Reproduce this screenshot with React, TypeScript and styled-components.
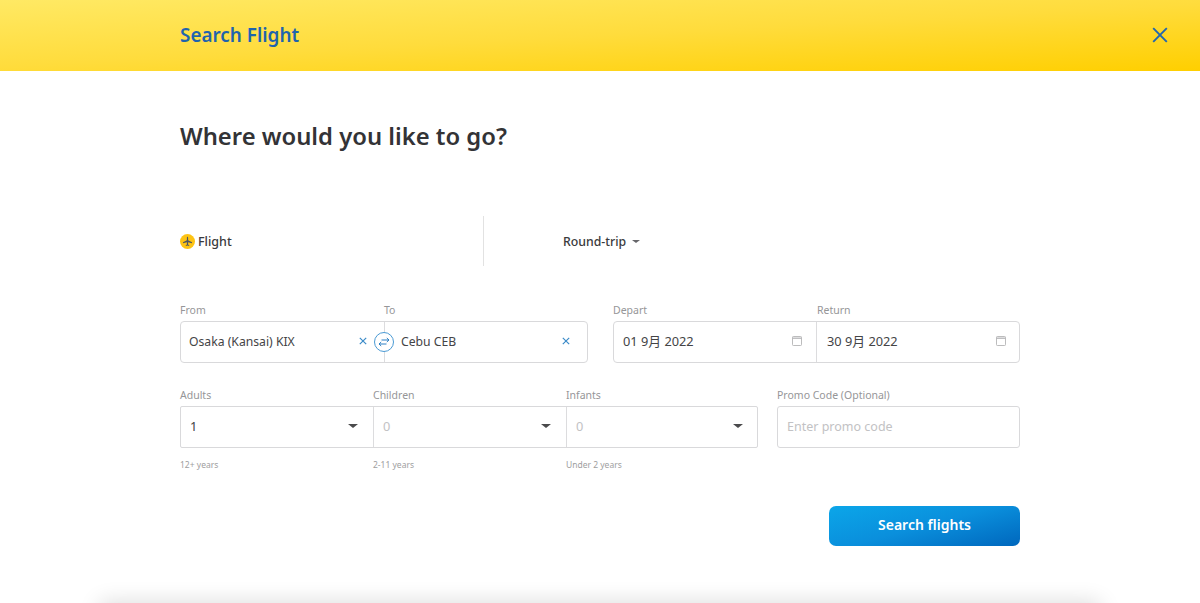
import styled, { createGlobalStyle } from "styled-components";

const GlobalStyle = createGlobalStyle`
  html, body {
    margin: 0;
    padding: 0;
    background: #fff;
  }
  * {
    box-sizing: border-box;
  }
`;

const bodyFont = `"Noto Sans", "Noto Sans CJK JP", sans-serif`;
const titleFont = `"Noto Sans", "Lato", sans-serif`;

const Page = styled.div`
  width: 1200px;
  height: 603px;
  overflow: hidden;
  background: #fff;
  font-family: ${bodyFont};
  color: #3a3a3c;
`;

const Header = styled.header`
  height: 71px;
  padding: 0 32px 2px 180px;
  display: flex;
  align-items: center;
  justify-content: space-between;
  background: linear-gradient(177deg, #ffe964 0%, #ffdc3c 50%, #ffcf00 100%);
`;

const HeaderTitle = styled.div`
  font-family: ${titleFont};
  font-size: 18.9px;
  font-weight: 600;
  color: #1f64ad;
`;

const CloseButton = styled.button`
  width: 16px;
  height: 16px;
  padding: 0;
  border: 0;
  background: none;
  display: block;
  color: #2266ae;
`;

const Content = styled.main`
  width: 840px;
  margin: 0 auto 0 180px;
`;

const Heading = styled.h1`
  margin: 47px 0 0;
  height: 36px;
  font-family: ${titleFont};
  font-size: 23.8px;
  line-height: 36px;
  font-weight: 600;
  color: #333336;
`;

const TripBar = styled.div`
  margin-top: 62px;
  height: 50px;
  display: flex;
  align-items: center;
`;

const TripType = styled.div`
  width: 304px;
  height: 100%;
  display: flex;
  align-items: center;
  gap: 3px;
  border-right: 1.5px solid #e2e2e2;
  font-size: 12.5px;
  font-weight: 500;
`;

const FlightBadge = styled.span`
  width: 15px;
  height: 15px;
  border-radius: 50%;
  background: #fdc314;
  display: flex;
  align-items: center;
  justify-content: center;
`;

const TripMode = styled.div`
  margin-left: 79px;
  display: flex;
  align-items: center;
  gap: 6px;
  font-size: 12.3px;
  font-weight: 500;
`;

const Caret = styled.span<{ $size: number; $color: string }>`
  width: 0;
  height: 0;
  border-left: ${(props) => props.$size}px solid transparent;
  border-right: ${(props) => props.$size}px solid transparent;
  border-top: ${(props) => props.$size - 1}px solid ${(props) => props.$color};
`;

const RouteRow = styled.div`
  margin-top: 37px;
  display: grid;
  grid-template-columns: 408px 407px;
  column-gap: 25px;
`;

const FieldGroup = styled.div`
  display: flex;
  flex-direction: column;
`;

const Labels = styled.div<{ $columns: string }>`
  display: grid;
  grid-template-columns: ${(props) => props.$columns};
  height: 14px;
  margin-bottom: 4px;
`;

const Label = styled.span`
  font-size: 10.5px;
  line-height: 14px;
  color: #969698;
`;

const Box = styled.div<{ $columns: string; $radius?: number }>`
  position: relative;
  height: 42px;
  display: grid;
  grid-template-columns: ${(props) => props.$columns};
  border: 1px solid #d9d9db;
  border-radius: ${(props) => props.$radius ?? 3}px;
  background: #fff;
`;

const Cell = styled.div<{ $divider?: boolean; $right: number; $muted?: boolean }>`
  display: flex;
  align-items: center;
  justify-content: space-between;
  padding: 0 ${(props) => props.$right}px 2px 9px;
  border-left: ${(props) => (props.$divider ? "1px solid #dcdcde" : "0")};
  font-size: 12.8px;
  color: ${(props) => (props.$muted ? "#c2c2c4" : "#444446")};
  white-space: nowrap;
`;

const DateCell = styled(Cell)`
  padding-bottom: 3px;
  padding-left: ${(props) => (props.$divider ? 10 : 9)}px;
`;

const RouteCell = styled(Cell)`
  padding-left: ${(props) => (props.$divider ? 16 : 8)}px;
  font-size: 12.2px;
`;

const SwapButton = styled.span`
  position: absolute;
  left: 193px;
  top: 10px;
  width: 20px;
  height: 20px;
  border-radius: 50%;
  border: 1px solid #4a9ad4;
  background: #fff;
  display: flex;
  align-items: center;
  justify-content: center;
`;

const PassengerRow = styled.div`
  margin-top: 25px;
  display: grid;
  grid-template-columns: 578px 243px;
  column-gap: 19px;
`;

const Hints = styled.div`
  margin-top: 11px;
  display: grid;
  grid-template-columns: repeat(3, 193px);
`;

const Hint = styled.span`
  font-size: 8.5px;
  line-height: 12px;
  color: #9e9ea0;
`;

const PromoInput = styled.input`
  width: 100%;
  height: 42px;
  padding: 0 9px 2px;
  border: 1px solid #d9d9db;
  border-radius: 3px;
  outline: none;
  font-family: ${bodyFont};
  font-size: 12.5px;
  color: #444446;
  &::placeholder {
    color: #c2c2c4;
    opacity: 1;
  }
`;

const Actions = styled.div`
  margin-top: 35px;
  display: flex;
  justify-content: flex-end;
`;

const SearchButton = styled.button`
  width: 191px;
  height: 40px;
  padding: 0 0 3px;
  border: 0;
  border-radius: 7px;
  background: linear-gradient(165deg, #0ba6e9 0%, #0a8fdc 50%, #0067bd 100%);
  font-family: ${titleFont};
  font-size: 14px;
  font-weight: 600;
  color: #fff;
`;

const BottomSheet = styled.div`
  margin: 58px 100px 0;
  height: 40px;
  background: #fff;
  box-shadow: 0 -2px 22px rgba(0, 0, 0, 0.14);
`;

const ClearIcon = () => (
  <svg width="8" height="8" viewBox="0 0 8 8" fill="none" stroke="#3b8bc9" strokeWidth="1.2">
    <path d="M0.8 0.8L7.2 7.2M7.2 0.8L0.8 7.2" />
  </svg>
);

const CalendarIcon = () => (
  <svg width="10" height="10" viewBox="0 0 10 10" fill="none" stroke="#b4b4b6">
    <rect x="0.5" y="0.5" width="9" height="9" rx="0.8" strokeWidth="0.9" />
    <path d="M0.5 2.2H9.5" strokeWidth="1.3" />
  </svg>
);

const routeFields = [
  { name: "Osaka (Kansai) KIX", divider: false, right: 17 },
  { name: "Cebu CEB", divider: true, right: 17 },
];

const dateFields = [
  { date: "01 9月 2022", divider: false, right: 14 },
  { date: "30 9月 2022", divider: true, right: 13 },
];

const passengerFields = [
  { label: "Adults", value: "1", hint: "12+ years", right: 15 },
  { label: "Children", value: "0", hint: "2-11 years", right: 15 },
  { label: "Infants", value: "0", hint: "Under 2 years", right: 14 },
];

function App() {
  return (
    <Page>
      <GlobalStyle />
      <Header>
        <HeaderTitle>Search Flight</HeaderTitle>
        <CloseButton aria-label="Close">
          <svg width="16" height="16" viewBox="0 0 16 16" fill="none" stroke="currentColor" strokeWidth="1.9">
            <path d="M1.2 1.2L14.8 14.8M14.8 1.2L1.2 14.8" />
          </svg>
        </CloseButton>
      </Header>
      <Content>
        <Heading>Where would you like to go?</Heading>
        <TripBar>
          <TripType>
            <FlightBadge>
              <svg width="11" height="11" viewBox="0 0 11 11" fill="#4b5563">
                <path d="M5.5 0.8C5.9 0.8 6.1 1.4 6.1 2V4.3L10 6.2V7.2L6.1 6.3V8.4L7.2 9.3V10L5.5 9.6L3.8 10V9.3L4.9 8.4V6.3L1 7.2V6.2L4.9 4.3V2C4.9 1.4 5.1 0.8 5.5 0.8Z" />
              </svg>
            </FlightBadge>
            Flight
          </TripType>
          <TripMode>
            Round-trip
            <Caret $size={4} $color="#66666a" />
          </TripMode>
        </TripBar>
        <RouteRow>
          <FieldGroup>
            <Labels $columns="204px 204px">
              <Label>From</Label>
              <Label>To</Label>
            </Labels>
            <Box $columns="203px 1fr" $radius={4}>
              {routeFields.map((field) => (
                <RouteCell key={field.name} $divider={field.divider} $right={field.right}>
                  {field.name}
                  <ClearIcon />
                </RouteCell>
              ))}
              <SwapButton>
                <svg width="12" height="10" viewBox="0 0 12 10" fill="none" stroke="#2a7fc4" strokeWidth="1">
                  <path d="M3.5 3H11M8.8 1L11 3L8.8 5" />
                  <path d="M8.5 7H1M3.2 5L1 7L3.2 9" />
                </svg>
              </SwapButton>
            </Box>
          </FieldGroup>
          <FieldGroup>
            <Labels $columns="204px 203px">
              <Label>Depart</Label>
              <Label>Return</Label>
            </Labels>
            <Box $columns="202px 1fr" $radius={4}>
              {dateFields.map((field) => (
                <DateCell key={field.date} $divider={field.divider} $right={field.right}>
                  {field.date}
                  <CalendarIcon />
                </DateCell>
              ))}
            </Box>
          </FieldGroup>
        </RouteRow>
        <PassengerRow>
          <FieldGroup>
            <Labels $columns="repeat(3, 193px)">
              {passengerFields.map((field) => (
                <Label key={field.label}>{field.label}</Label>
              ))}
            </Labels>
            <Box $columns="192px 193px 1fr" $radius={2}>
              {passengerFields.map((field, index) => (
                <Cell key={field.label} $divider={index > 0} $right={field.right} $muted={index > 0}>
                  {field.value}
                  <Caret $size={5} $color="#4a4a4c" />
                </Cell>
              ))}
            </Box>
            <Hints>
              {passengerFields.map((field) => (
                <Hint key={field.hint}>{field.hint}</Hint>
              ))}
            </Hints>
          </FieldGroup>
          <FieldGroup>
            <Labels $columns="1fr">
              <Label>Promo Code (Optional)</Label>
            </Labels>
            <PromoInput placeholder="Enter promo code" />
          </FieldGroup>
        </PassengerRow>
        <Actions>
          <SearchButton>Search flights</SearchButton>
        </Actions>
      </Content>
      <BottomSheet />
    </Page>
  );
}

export default App;
